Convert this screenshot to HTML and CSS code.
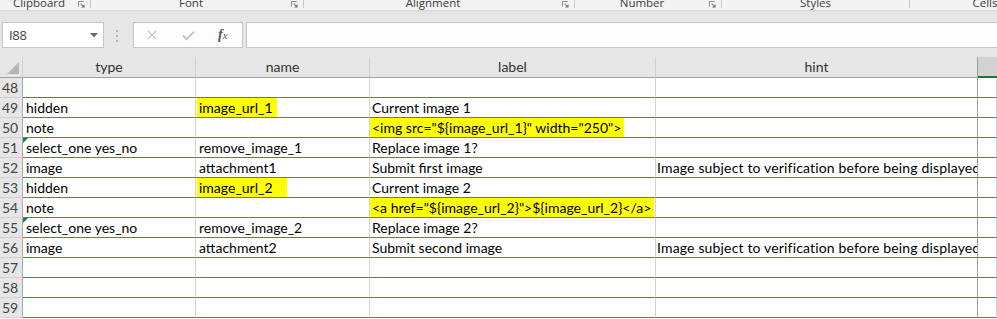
FILE: index.html
```html
<!DOCTYPE html>
<html>
<head>
<meta charset="utf-8">
<link rel="stylesheet" href="styles.css">
</head>
<body>
<div class="ribbon">
  <div class="grp g1"><span class="glabel">Clipboard</span><svg class="launch" viewBox="0 0 8 8"><path d="M0.5 6.5V0.5H6.5" fill="none" stroke="#7a7a7a"/><path d="M3 3L7 7" stroke="#7a7a7a" stroke-width="1.2"/><path d="M3.5 7.5H7.5V3.5Z" fill="#7a7a7a"/></svg></div>
  <div class="grp g2"><span class="glabel">Font</span><svg class="launch" viewBox="0 0 8 8"><path d="M0.5 6.5V0.5H6.5" fill="none" stroke="#7a7a7a"/><path d="M3 3L7 7" stroke="#7a7a7a" stroke-width="1.2"/><path d="M3.5 7.5H7.5V3.5Z" fill="#7a7a7a"/></svg></div>
  <div class="grp g3"><span class="glabel">Alignment</span><svg class="launch" viewBox="0 0 8 8"><path d="M0.5 6.5V0.5H6.5" fill="none" stroke="#7a7a7a"/><path d="M3 3L7 7" stroke="#7a7a7a" stroke-width="1.2"/><path d="M3.5 7.5H7.5V3.5Z" fill="#7a7a7a"/></svg></div>
  <div class="grp g4"><span class="glabel">Number</span><svg class="launch" viewBox="0 0 8 8"><path d="M0.5 6.5V0.5H6.5" fill="none" stroke="#7a7a7a"/><path d="M3 3L7 7" stroke="#7a7a7a" stroke-width="1.2"/><path d="M3.5 7.5H7.5V3.5Z" fill="#7a7a7a"/></svg></div>
  <div class="grp g5"><span class="glabel">Styles</span></div>
  <div class="grp g6"><span class="glabel">Cells</span></div>
</div>

<div class="fbar">
  <div class="namebox"><span class="nbtext">I88</span><svg class="nbarrow" viewBox="0 0 8 5"><path d="M0 0H8L4 4.5Z" fill="#6a6a6a"/></svg></div>
  <div class="dots"><i></i><i></i><i></i></div>
  <div class="btns">
    <svg class="bx" viewBox="0 0 11 11"><path d="M1 1L10 10M10 1L1 10" stroke="#c2c2c2" stroke-width="1.4"/></svg>
    <svg class="bchk" viewBox="0 0 14 11"><path d="M1 5.5L5 9.5L13 1.5" fill="none" stroke="#c2c2c2" stroke-width="2"/></svg>
    <span class="fx">f<span class="fxx">x</span></span>
  </div>
  <div class="finput"></div>
</div>

<div class="sheet">
  <div class="row hdr">
    <div class="c rh corner"><svg class="tri" viewBox="0 0 12 12"><path d="M12 0V12H0Z" fill="#b7b7b7"/></svg></div>
    <div class="c ch">type</div>
    <div class="c ch">name</div>
    <div class="c ch">label</div>
    <div class="c ch dlast">hint</div>
    <div class="c ch sel"></div>
  </div>
  <div class="row bright"><div class="c rh">48</div><div class="c"></div><div class="c"></div><div class="c"></div><div class="c dlast"></div><div class="c"></div></div>
  <div class="row bright"><div class="c rh">49</div><div class="c">hidden</div><div class="c"><span class="hl hl1">image_url_1</span></div><div class="c">Current image 1</div><div class="c dlast"></div><div class="c"></div></div>
  <div class="row"><div class="c rh">50</div><div class="c">note</div><div class="c"></div><div class="c"><span class="hl hl2">&lt;img src="${image_url_1}" width="250"&gt;</span></div><div class="c dlast"></div><div class="c"></div></div>
  <div class="row"><div class="c rh">51</div><div class="c flag">select_one yes_no</div><div class="c">remove_image_1</div><div class="c">Replace image 1?</div><div class="c dlast"></div><div class="c"></div></div>
  <div class="row"><div class="c rh">52</div><div class="c">image</div><div class="c">attachment1</div><div class="c">Submit first image</div><div class="c dlast hint">Image subject to verification before being displayed</div><div class="c"></div></div>
  <div class="row"><div class="c rh">53</div><div class="c">hidden</div><div class="c"><span class="hl hl3">image_url_2</span></div><div class="c">Current image 2</div><div class="c dlast"></div><div class="c"></div></div>
  <div class="row"><div class="c rh">54</div><div class="c">note</div><div class="c"></div><div class="c ovf"><span class="hl hl4">&lt;a href="${image_url_2}"&gt;${image_url_2}&lt;/a&gt;</span></div><div class="c dlast"></div><div class="c"></div></div>
  <div class="row"><div class="c rh">55</div><div class="c flag">select_one yes_no</div><div class="c">remove_image_2</div><div class="c">Replace image 2?</div><div class="c dlast"></div><div class="c"></div></div>
  <div class="row"><div class="c rh">56</div><div class="c">image</div><div class="c">attachment2</div><div class="c">Submit second image</div><div class="c dlast hint">Image subject to verification before being displayed</div><div class="c"></div></div>
  <div class="row"><div class="c rh">57</div><div class="c"></div><div class="c"></div><div class="c"></div><div class="c dlast"></div><div class="c"></div></div>
  <div class="row"><div class="c rh">58</div><div class="c"></div><div class="c"></div><div class="c"></div><div class="c dlast"></div><div class="c"></div></div>
  <div class="row"><div class="c rh">59</div><div class="c"></div><div class="c"></div><div class="c"></div><div class="c dlast"></div><div class="c"></div></div>
</div>
</body>
</html>
```
FILE: styles.css
```css
html, body {
  margin: 0;
  padding: 0;
  background: #ffffff;
  overflow: hidden;
}
body {
  width: 997px;
  height: 319px;
  font-family: "Lato", "Liberation Sans", sans-serif;
}

/* ribbon group labels */
.ribbon {
  display: flex;
  height: 10px;
  background: #f3f3f3;
  overflow: hidden;
  font-family: "Open Sans", "Noto Sans", sans-serif;
  font-size: 11.5px;
  color: #3c3c3c;
}
.grp {
  display: flex;
  align-items: flex-start;
  flex: none;
  border-right: 1px solid #c8c8c8;
  height: 8px;
}
.glabel {
  flex: 1;
  text-align: center;
  line-height: 12px;
  margin-top: -3px;
  white-space: nowrap;
}
.launch {
  width: 7px;
  height: 7px;
  margin: 1px 5px 0 0;
  flex: none;
}
.g1 { width: 90px; }
.g2 { width: 212px; }
.g3 { width: 270px; }
.g4 { width: 146px; }
.g5 { width: 187px; }
.g6 { width: 150px; border-right: none; }

/* formula bar */
.fbar {
  display: flex;
  align-items: flex-start;
  height: 47px;
  padding-top: 12px;
  box-sizing: border-box;
  background: linear-gradient(#d2d2d2 0, #dedede 1px, #e6e6e6 3px, #e6e6e6 100%);
}
.namebox {
  display: flex;
  align-items: center;
  width: 102px;
  height: 26px;
  margin-left: 2px;
  box-sizing: border-box;
  border: 1px solid #c6c6c6;
  background: #ffffff;
  font-family: "Open Sans", "Noto Sans", sans-serif;
  font-size: 13px;
  color: #444444;
}
.nbtext {
  flex: 1;
  padding-left: 6px;
  letter-spacing: -0.3px;
}
.nbarrow {
  width: 8px;
  height: 5px;
  margin-right: 5px;
}
.dots {
  display: flex;
  flex-direction: column;
  gap: 3px;
  width: 3px;
  margin: 8px 14px 0 12px;
}
.dots i {
  display: block;
  width: 2px;
  height: 2px;
  background: #b0b0b0;
}
.btns {
  display: flex;
  align-items: center;
  width: 110px;
  height: 26px;
  box-sizing: border-box;
  border: 1px solid #c6c6c6;
  background: #fdfdfd;
}
.bx {
  width: 10px;
  height: 10px;
  margin-left: 13px;
}
.bchk {
  width: 13px;
  height: 11px;
  margin-left: 25px;
}
.fx {
  margin-left: 23px;
  font-family: "Liberation Serif", serif;
  font-style: italic;
  font-weight: bold;
  font-size: 14px;
  color: #555555;
  line-height: 1;
}
.fxx {
  font-size: 11px;
  font-weight: normal;
}
.finput {
  flex: 1;
  height: 26px;
  margin-left: 3px;
  box-sizing: border-box;
  border: 1px solid #c6c6c6;
  border-right: none;
  background: #fdfdfd;
}

/* sheet grid */
.sheet {
  display: flex;
  flex-direction: column;
}
.row {
  display: grid;
  grid-template-columns: 23px 173px 174px 286px 322px 19px;
  height: 20px;
}
.c {
  position: relative;
  box-sizing: border-box;
  border-right: 1px solid #d4d4d4;
  border-bottom: 1px solid #2a9d4c;
  padding-left: 2px;
  font-size: 14px;
  line-height: 19px;
  color: #000000;
  white-space: nowrap;
  overflow: hidden;
}
.row .c:nth-child(2), .row .c:nth-child(3) { padding-left: 3px; }
.row.bright .c { border-bottom-color: #00b050; }
.c.dlast { border-right-color: #9e9e9e; }
.c.hint { letter-spacing: 0.16px; padding-left: 1px; }
.c.ovf { overflow: visible; z-index: 1; }

.rh {
  background: #e6e6e6;
  border-right: 1px solid #ababab;
  border-bottom: 1px solid #d0d0d0 !important;
  padding-left: 0 !important;
  text-align: center;
  color: #444444;
  padding-right: 2px;
}
.row.hdr {
  height: 21px;
}
.row.hdr .c {
  background: #e6e6e6;
  border-bottom: 1px solid #a0a0a0;
  line-height: 20px;
  text-align: center;
  color: #333333;
  padding-left: 0;
}
.row.hdr .ch { border-right-color: #d0d0d0; }
.row.hdr .ch.dlast { border-right-color: #9e9e9e; }
.row.hdr .corner {
  border-bottom: 1px solid #a0a0a0 !important;
  border-right: 1px solid #d0d0d0;
}
.tri {
  position: absolute;
  left: 7px;
  top: 5px;
  width: 12px;
  height: 12px;
}
.row.hdr .sel {
  background: #d2d2d2;
  border-bottom: 2px solid #217346;
  border-right: none;
}

.hl {
  background: #ffff00;
  padding: 1px 3px 1px 2px;
  margin-left: -2px;
}
.hl1 { padding-right: 4px; }
.hl3 { padding-right: 14px; }
.hl2 { padding: 2px 3px 2px 2px; }
.hl4 { padding: 1px 3px 1px 2px; }

.flag::before {
  content: "";
  position: absolute;
  left: 0;
  top: 0;
  width: 0;
  height: 0;
  border-top: 5px solid #1f7a3a;
  border-right: 5px solid transparent;
}
```
